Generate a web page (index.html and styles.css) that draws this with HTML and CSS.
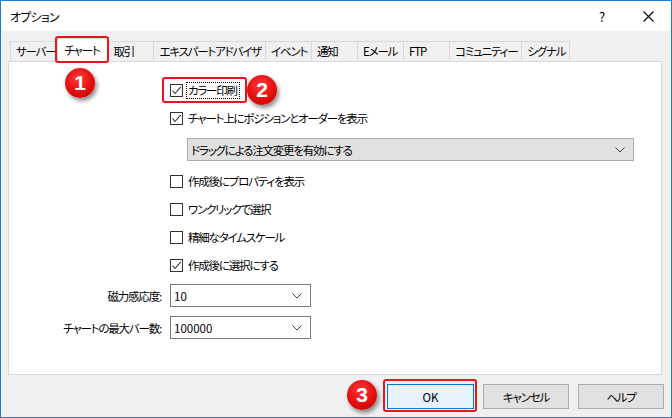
FILE: index.html
```html
<!DOCTYPE html>
<html lang="ja">
<head>
    <meta charset="UTF-8">
    <title>オプション</title>
    <link rel="stylesheet" href="styles.css">
</head>
<body>
    <div class="window">
        <div class="titlebar">
            <span class="title">オプション</span>
            <span class="title-btn">?</span>
            <span class="title-btn">
                <svg width="11" height="11" viewBox="0 0 11 11"><path d="M0.5 0.5L10.5 10.5M10.5 0.5L0.5 10.5" stroke="#000" stroke-width="1.1" fill="none"/></svg>
            </span>
        </div>

        <div class="client">
            <div class="tabs">
                <div class="tab">サーバー</div>
                <div class="tab active mark">チャート</div>
                <div class="tab">取引</div>
                <div class="tab">エキスパートアドバイザ</div>
                <div class="tab">イベント</div>
                <div class="tab">通知</div>
                <div class="tab">Eメール</div>
                <div class="tab">FTP</div>
                <div class="tab">コミュニティー</div>
                <div class="tab">シグナル</div>
            </div>

            <div class="panel">
                <div class="check">
                    <span class="check-inner mark mark-check">
                        <span class="box checked"><svg width="11" height="11" viewBox="0 0 11 11"><path d="M1.5 5.5L4 8.5L9.8 1.8" stroke="#333" stroke-width="1.1" fill="none"/></svg></span>
                        <span class="text focus">カラー印刷</span>
                    </span>
                </div>
                <div class="check">
                    <span class="box checked"><svg width="11" height="11" viewBox="0 0 11 11"><path d="M1.5 5.5L4 8.5L9.8 1.8" stroke="#333" stroke-width="1.1" fill="none"/></svg></span>
                    <span class="text">チャート上にポジションとオーダーを表示</span>
                </div>
                <div class="select select-wide">
                    <span>ドラッグによる注文変更を有効にする</span>
                    <svg class="chevron" width="10" height="6" viewBox="0 0 10 6"><path d="M0.5 0.5L5 5L9.5 0.5" stroke="#444" stroke-width="1" fill="none"/></svg>
                </div>
                <div class="check">
                    <span class="box"></span>
                    <span class="text">作成後にプロパティを表示</span>
                </div>
                <div class="check">
                    <span class="box"></span>
                    <span class="text">ワンクリックで選択</span>
                </div>
                <div class="check">
                    <span class="box"></span>
                    <span class="text">精細なタイムスケール</span>
                </div>
                <div class="check">
                    <span class="box checked"><svg width="11" height="11" viewBox="0 0 11 11"><path d="M1.5 5.5L4 8.5L9.8 1.8" stroke="#333" stroke-width="1.1" fill="none"/></svg></span>
                    <span class="text">作成後に選択にする</span>
                </div>

                <div class="fields">
                    <span class="field-label">磁力感応度:</span>
                    <div class="select select-small">
                        <span class="num">10</span>
                        <svg class="chevron" width="10" height="6" viewBox="0 0 10 6"><path d="M0.5 0.5L5 5L9.5 0.5" stroke="#444" stroke-width="1" fill="none"/></svg>
                    </div>
                    <span class="field-label">チャートの最大バー数:</span>
                    <div class="select select-small">
                        <span class="num">100000</span>
                        <svg class="chevron" width="10" height="6" viewBox="0 0 10 6"><path d="M0.5 0.5L5 5L9.5 0.5" stroke="#444" stroke-width="1" fill="none"/></svg>
                    </div>
                </div>
            </div>

            <div class="buttons">
                <button class="btn btn-default mark mark-btn"><span class="num">OK</span></button>
                <button class="btn">キャンセル</button>
                <button class="btn">ヘルプ</button>
            </div>
        </div>

        <!-- 番号マーカー -->
        <span class="badge badge-1">1</span>
        <span class="badge badge-2">2</span>
        <span class="badge badge-3">3</span>
    </div>
</body>
</html>
```

FILE: styles.css
```css
/* ダイアログ全体 */
body {
    margin: 0;
    background: #fff;
}

.window {
    position: relative;
    width: 672px;
    height: 418px;
    box-sizing: border-box;
    border: 1px solid #1a7fd4;
    background-color: #f0f0f0;
    display: flex;
    flex-direction: column;
    font-family: "Noto Sans CJK JP", "Noto Sans", sans-serif;
    font-size: 11.5px;
    letter-spacing: -1.2px;
    font-feature-settings: "palt";
    color: #000;
}

.num {
    letter-spacing: 0;
    font-size: 11.5px;
}

.titlebar {
    height: 30px;
    background-color: #fff;
    display: flex;
    align-items: center;
    padding-left: 9px;
    font-size: 12px;
    letter-spacing: -0.8px;
}

.title {
    flex: 1;
}

.title-btn {
    width: 46px;
    height: 30px;
    display: flex;
    align-items: center;
    justify-content: center;
    font-size: 13px;
    letter-spacing: 0;
}

.client {
    flex: 1;
    padding: 7px 9px 0 7px;
}

/* タブ */
.tabs {
    display: flex;
    align-items: flex-end;
    height: 23px;
    padding-left: 2px;
    position: relative;
    z-index: 1;
}

.tab {
    position: relative;
    height: 20px;
    box-sizing: border-box;
    min-width: 47px;
    padding: 0 4px 0 5px;
    margin-right: -1px;
    border: 1px solid #d9d9d9;
    border-bottom: none;
    line-height: 18px;
    background-color: #f0f0f0;
    white-space: nowrap;
}

.tab.active {
    height: 24px;
    min-width: 51px;
    margin: 0 -1px -1px -2px;
    padding: 2px 6px 0;
    background-color: #fff;
    z-index: 2;
}

.panel {
    height: 314px;
    box-sizing: border-box;
    border: 1px solid #d9d9d9;
    background-color: #fff;
    padding-top: 14px;
}

/* チェックボックス */
.check {
    display: flex;
    align-items: center;
    height: 28px;
    margin-left: 161px;
}

.check-inner {
    position: relative;
    display: flex;
    align-items: center;
}

.box {
    width: 13px;
    height: 13px;
    box-sizing: border-box;
    border: 1px solid #333;
    background-color: #fff;
    display: flex;
    align-items: center;
    justify-content: center;
}

.text {
    margin-left: 3px;
    padding: 0 2px 0 1px;
    line-height: 15px;
    border: 1px solid transparent;
}

.text.focus {
    border: 1px dotted #000;
}

/* コンボボックス */
.select {
    display: flex;
    align-items: center;
    justify-content: space-between;
    box-sizing: border-box;
    height: 23px;
    padding: 0 8px 0 3px;
}

.select-wide {
    margin: 6px 0 6px 178px;
    width: 447px;
    background-color: #e1e1e1;
    border: 1px solid #adadad;
}

.select-small {
    width: 141px;
    background-color: #fff;
    border: 1px solid #7a7a7a;
}

.fields {
    display: grid;
    grid-template-columns: 152px 141px;
    column-gap: 9px;
    row-gap: 9px;
    align-items: center;
    margin-top: 5px;
}

.field-label {
    text-align: right;
}

/* ボタン */
.buttons {
    display: flex;
    justify-content: flex-end;
    gap: 9px;
    margin: 9px -2px 0 0;
}

.btn {
    position: relative;
    width: 86px;
    height: 25px;
    box-sizing: border-box;
    border: 1px solid #adadad;
    background-color: #e1e1e1;
    font-family: inherit;
    font-size: 11.5px;
    letter-spacing: -1.2px;
    font-feature-settings: "palt";
    color: #000;
    padding: 0;
}

.btn-default {
    width: 87px;
    border: 1px solid #0078d7;
    background-color: #e5f1fb;
}

/* 赤い強調枠 */
.mark::after {
    content: "";
    position: absolute;
    top: -3px;
    left: -3px;
    right: -2px;
    bottom: -1px;
    border: 2px solid #e8151d;
    border-radius: 3px;
    pointer-events: none;
}

.mark-check::after {
    top: -5px;
    bottom: -4px;
    left: -8px;
    right: -7px;
}

.mark-btn::after {
    top: -6px;
    bottom: -4px;
    left: -5px;
    right: -4px;
}

.badge {
    position: absolute;
    width: 30px;
    height: 30px;
    border-radius: 50%;
    background: radial-gradient(circle at 45% 35%, #ff3b3b 0%, #e30d0d 55%, #b80000 100%);
    box-shadow: 2px 3px 4px rgba(0, 0, 0, 0.45);
    color: #fff;
    font-family: "Liberation Sans", Arial, sans-serif;
    font-weight: bold;
    font-size: 21px;
    letter-spacing: 0;
    line-height: 30px;
    text-align: center;
    z-index: 5;
}

.badge-1 {
    left: 64px;
    top: 67px;
}

.badge-2 {
    left: 246px;
    top: 74px;
}

.badge-3 {
    left: 346px;
    top: 379px;
}
```
